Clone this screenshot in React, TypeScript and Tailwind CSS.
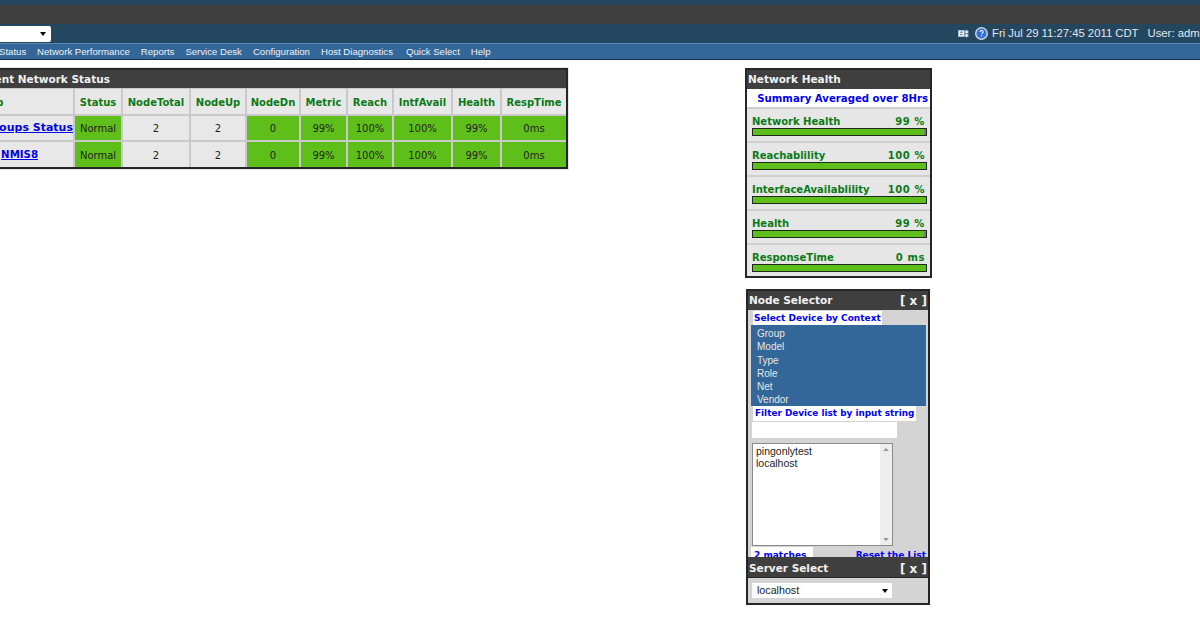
import React from 'react';

const verdana = 'font-["DejaVu_Sans",sans-serif]';
const arial = 'font-["Liberation_Sans",Arial,sans-serif]';

const menu = ['Status', 'Network Performance', 'Reports', 'Service Desk', 'Configuration', 'Host Diagnostics', 'Quick Select', 'Help'];
const columns = ['Group', 'Status', 'NodeTotal', 'NodeUp', 'NodeDn', 'Metric', 'Reach', 'IntfAvail', 'Health', 'RespTime'];
const rows = [
  { name: 'All Groups Status', indent: 'justify-end text-[11px]' },
  { name: 'NMIS8', indent: 'justify-end pr-[35px] text-[10.2px]' },
];
const health = [
  { label: 'Network Health', value: '99 %', full: false },
  { label: 'Reachablility', value: '100 %', full: true },
  { label: 'InterfaceAvailablility', value: '100 %', full: true },
  { label: 'Health', value: '99 %', full: false },
  { label: 'ResponseTime', value: '0 ms', full: true },
];
const contexts = ['Group', 'Model', 'Type', 'Role', 'Net', 'Vendor'];

function Caret() {
  return <span className="h-0 w-0 border-x-[3px] border-t-[4px] border-x-transparent border-t-black" />;
}

function PanelTitle({ title, close, tall }: { title: string; close?: boolean; tall?: boolean }) {
  return (
    <div className={`flex items-center justify-between bg-[#3f3f3f] pl-[1px] pr-[1px] text-[10.5px] font-bold text-[#f2f2f2] ${verdana} ${tall ? 'h-[20px] pt-[4px]' : 'h-[19px]'}`}>
      <span>{title}</span>
      {close && <span className="text-[12px]">[ x ]</span>}
    </div>
  );
}

function Cell({ text, green }: { text: string; green?: boolean }) {
  return (
    <div className={`flex items-center justify-center pt-[1px] text-[10px] text-[#222] ${verdana} ${green ? 'bg-[#5fbf1a]' : 'bg-[#e8e8e8]'}`}>
      {text}
    </div>
  );
}

function StatusTable() {
  return (
    <div className="h-[101px] w-[618px] shrink-0 border-2 border-l-0 border-[#262626] bg-[#c9c9c9] shadow-[0_0_0_1px_#e5e5e5]">
      <div className={`flex h-[18px] items-center whitespace-nowrap bg-[#3f3f3f] pl-[19px] pt-[1px] text-[10.5px] font-bold text-[#f2f2f2] ${verdana}`}>
        Current Network Status
      </div>
      <div className="mt-[1px] grid h-[78px] grid-cols-[123px_46px_66px_54px_52px_45px_44px_57px_47px_64px] grid-rows-[25px_24px_25px] gap-[2px]">
        {columns.map((col, i) => (
          <div
            key={col}
            className={`flex items-center bg-[#e8e8e8] pt-[1px] text-[10px] font-bold text-[#0b7a16] ${verdana} ${i === 0 ? 'justify-start pl-[19px]' : 'justify-center'}`}
          >
            {col}
          </div>
        ))}
        {rows.map((row) => (
          <React.Fragment key={row.name}>
            <div className={`flex items-center bg-[#e8e8e8] pt-[1px] font-bold whitespace-nowrap text-[#0000e6] underline ${verdana} ${row.indent}`}>
              {row.name}
            </div>
            <Cell text="Normal" green />
            <Cell text="2" />
            <Cell text="2" />
            <Cell text="0" green />
            <Cell text="99%" green />
            <Cell text="100%" green />
            <Cell text="100%" green />
            <Cell text="99%" green />
            <Cell text="0ms" green />
          </React.Fragment>
        ))}
      </div>
    </div>
  );
}

function HealthPanel() {
  return (
    <div className="h-[210px] w-[187px] border-2 border-[#262626] bg-[#e6e6e6]">
      <PanelTitle title="Network Health" />
      <div className={`flex h-[18px] items-center justify-end bg-white pr-[2px] pt-[1px] text-[10.15px] font-bold text-[#0000f0] ${verdana}`}>
        Summary Averaged over 8Hrs
      </div>
      {health.map((item) => (
        <div key={item.label} className="h-[34px] border-t-2 border-[#cfcfcf] pl-[5px] pr-[3px] pt-[6px]">
          <div className={`flex h-[13px] items-center justify-between pr-[2px] text-[10px] font-bold text-[#0b7a16] ${verdana}`}>
            <span>{item.label}</span>
            <span className="tracking-[0.6px]">{item.value}</span>
          </div>
          <div className="flex h-[8px] border border-[#1d2b1d] bg-[#777]">
            <div className={`h-full bg-[#5fbf1a] ${item.full ? 'w-full' : 'w-[99%]'}`} />
          </div>
        </div>
      ))}
    </div>
  );
}

function NodeSelector() {
  return (
    <div className="mt-[11px] w-[184px] border-2 border-[#262626] bg-[#d4d4d4]">
      <PanelTitle title="Node Selector" close />
      <div className="h-[247px] overflow-hidden pl-[3px] pt-[1px]">
        <div className={`ml-[2px] flex h-[14px] w-fit items-center whitespace-nowrap bg-white px-[1px] pt-[2px] text-[9px] font-bold text-[#0000f0] ${verdana}`}>
          Select Device by Context
        </div>
        <div className={`h-[81px] w-[175px] overflow-hidden bg-[#336699] pl-[6px] pt-[2px] text-[10px] leading-[13.3px] text-[#e6e6e6] ${arial}`}>
          {contexts.map((c) => (
            <div key={c}>{c}</div>
          ))}
        </div>
        <div className={`ml-[2px] flex h-[15px] w-fit items-center whitespace-nowrap bg-white px-[2px] pt-[1px] text-[8.9px] font-bold text-[#0000f0] ${verdana}`}>
          Filter Device list by input string
        </div>
        <div className="mt-[1px] ml-[1px] h-[16px] w-[145px] bg-white" />
        <div className={`mt-[5px] ml-[1px] flex h-[103px] w-[141px] border border-[#8a8a8a] bg-white text-[10.5px] leading-[12px] text-[#222] ${arial}`}>
          <div className="flex-1 pl-[3px] pt-[1px]">
            <div>pingonlytest</div>
            <div>localhost</div>
          </div>
          <div className="flex w-[12px] flex-col items-center justify-between bg-[#eeeeee] py-[4px]">
            <span className="h-0 w-0 border-x-[3px] border-b-[3px] border-x-transparent border-b-[#999]" />
            <span className="h-0 w-0 border-x-[3px] border-t-[3px] border-x-transparent border-t-[#999]" />
          </div>
        </div>
        <div className={`mt-[1px] flex items-start justify-between pr-[2px] text-[9px] font-bold text-[#0000f0] ${verdana}`}>
          <span className="h-[13px] w-[62px] bg-white pl-[3px] pt-[2px]">2 matches</span>
          <span className="pt-[2px]">Reset the List</span>
        </div>
      </div>
      <PanelTitle title="Server Select" close tall />
      <div className="h-[26px] border-t border-[#262626] pl-[4px] pt-[5px]">
        <div className={`flex h-[15px] w-[140px] items-center justify-between bg-white pl-[5px] pr-[4px] text-[10.7px] text-[#222] ${arial}`}>
          <span>localhost</span>
          <Caret />
        </div>
      </div>
    </div>
  );
}

function HelpIcons() {
  return (
    <div className="flex items-center gap-[6px]">
      <svg width="11" height="9" viewBox="0 0 11 9">
        <rect x="0.5" y="1.5" width="6" height="6" fill="#eef2f6" stroke="#a9bccb" />
        <path d="M2 3.2h3M2 5.5h2.5" stroke="#5878a0" />
        <circle cx="8.6" cy="3" r="1.9" fill="#eef2f6" stroke="#5878a0" />
        <circle cx="8.6" cy="6.4" r="1.9" fill="#eef2f6" stroke="#5878a0" />
      </svg>
      <svg width="13" height="13" viewBox="0 0 13 13">
        <circle cx="6.5" cy="6.5" r="6.5" fill="#c9d6e2" />
        <circle cx="6.5" cy="6.5" r="5" fill="#2f6fd6" />
        <path d="M5 5c0-2 3.2-2 3.2 0 0 1.1-1.6 1.2-1.6 2.3" stroke="#fff" strokeWidth="1.1" fill="none" />
        <rect x="6.1" y="8.3" width="1.1" height="1.1" fill="#fff" />
      </svg>
    </div>
  );
}

export default function App() {
  return (
    <div className="h-[630px] w-[1200px] overflow-hidden bg-white">
      <div className="h-[5px] bg-[#24465f]" />
      <div className="h-[19px] bg-[#3f3f3f]" />
      <div className={`flex h-[19px] items-center justify-between bg-[#24465f] text-[11.3px] text-[#e3e8ec] ${arial}`}>
        <div className="flex h-[16px] w-[51px] items-center justify-end rounded-r-[2px] bg-white pr-[5px]">
          <Caret />
        </div>
        <div className="flex w-[242px] shrink-0 items-center gap-[4px] overflow-hidden whitespace-nowrap">
          <HelpIcons />
          <span>Fri Jul 29 11:27:45 2011 CDT</span>
          <span className="ml-[5px]">User: admin</span>
        </div>
      </div>
      <nav className={`flex h-[17px] items-center gap-[11px] overflow-hidden border-y border-t-[#5c8ab5] border-b-[#16324a] bg-[#336699] pt-[1px] text-[9.6px] whitespace-nowrap text-[#eef2f6] ${arial}`}>
        {menu.map((m, i) => (
          <span key={m} className={i === 0 ? '-ml-[1px] w-[27px]' : m === 'Host Diagnostics' ? 'w-[74px]' : ''}>
            {m}
          </span>
        ))}
      </nav>
      <main className="-ml-[50px] flex items-start pt-[8px]">
        <StatusTable />
        <div className="ml-[177px] flex w-[187px] flex-col items-start">
          <HealthPanel />
          <div className="ml-[1px]">
            <NodeSelector />
          </div>
        </div>
      </main>
    </div>
  );
}
